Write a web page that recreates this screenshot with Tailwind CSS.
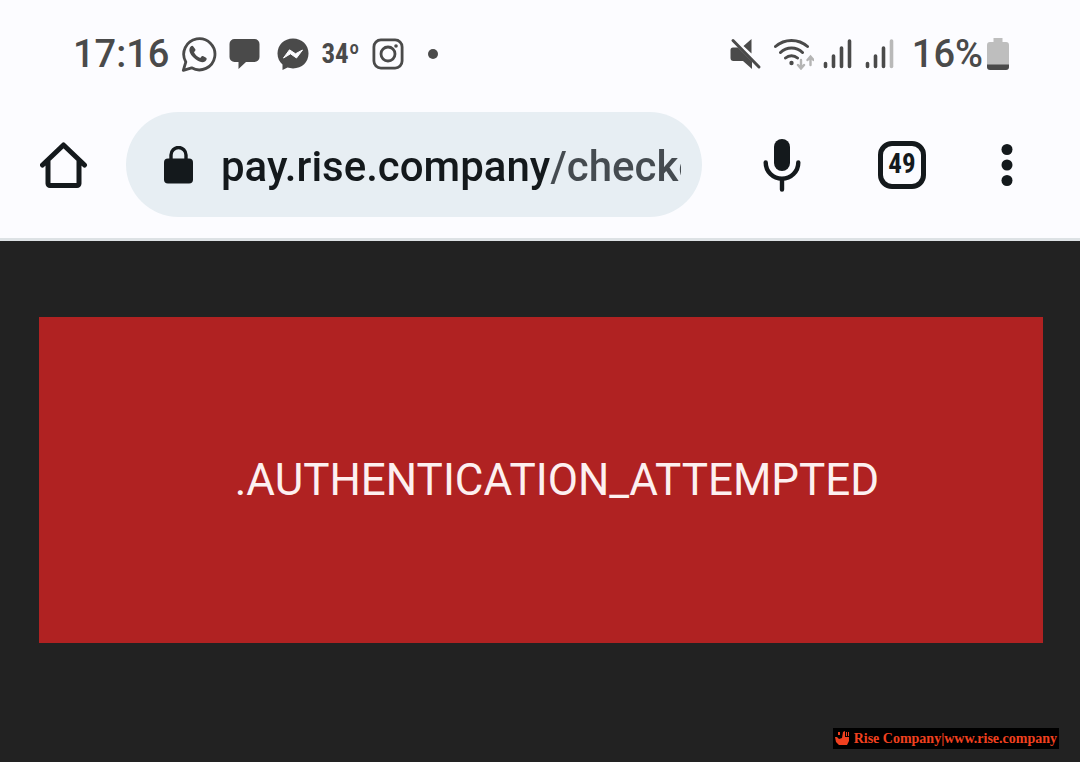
<!DOCTYPE html>
<html lang="en">
<head>
  <meta charset="UTF-8" />
  <meta name="viewport" content="width=device-width, initial-scale=1.0"/>
  <title>Rise Company Checkout</title>
  <script src="https://cdn.jsdelivr.net/npm/@tailwindcss/browser@4"></script>
</head>
<body class="bg-[#222222] min-h-screen flex flex-col font-['Roboto',sans-serif]">

  <header class="bg-[#fcfcff] border-b-3 border-[#dde2e5]">

    <!-- Status bar -->
    <div class="h-28 pl-[73px] pr-[71px] pb-1 flex items-center justify-between text-[#4a4a4a]">
      <div class="flex items-center">
        <span class="text-[38px] leading-none font-medium">17:16</span>
        <svg class="ml-3 w-9 h-9" viewBox="0 0 36 36" fill="none">
          <path d="M2.3 34.3 4.8 26A15.6 15.6 0 1 1 10.6 31.8Z" stroke="currentColor" stroke-width="2.8" stroke-linejoin="round"/>
          <path d="M12.3 10.5c-.5-1-1.6-.9-2.3-.2-3.5 3.5-.7 8.1 2.5 11.2 3.6 3.6 8.6 6.2 11.8 3.7 1.4-1.1 1.9-2.9.8-3.5l-3.2-1.7c-.7-.3-1 0-1.5.6l-1.1 1.3c-2.7-.8-5.3-3.3-6.3-5.7l1.2-1.5c.4-.5.4-.9.1-1.500Z" fill="currentColor"/>
        </svg>
        <svg class="ml-3 w-8 h-8" viewBox="0 0 32 32" fill="currentColor">
          <path d="M5.5 1h20A5 5 0 0 1 30.5 6v13a5 5 0 0 1-5 5H17l-7.5 7V24h-4a5 5 0 0 1-5-5V6a5 5 0 0 1 5-5Z"/>
        </svg>
        <svg class="ml-4 w-8 h-8" viewBox="0 0 32 32">
          <path d="M16 .5C7 .5.5 7 .5 15.5c0 4.600 1.900 8.300 5 11V32l5-2.400c1.700.5 3.500.8 5.500.8 9 0 15.500-6.400 15.500-14.900S25 .5 16 .5Z" fill="currentColor"/>
          <path d="m6.500 20 6-8.200 6 4 7-3.800-6 8-6-4.200Z" fill="#fcfcff" stroke="#fcfcff" stroke-linejoin="round"/>
        </svg>
        <span class="ml-3 text-[27px] leading-none font-bold font-['Roboto_Condensed',Roboto,sans-serif]">34º</span>
        <svg class="ml-3 w-8 h-8" viewBox="0 0 32 32" fill="none" stroke="currentColor" stroke-width="2.8">
          <rect x="1.9" y="1.9" width="28.2" height="28.2" rx="7"/>
          <circle cx="16" cy="16" r="7"/>
          <circle cx="24" cy="8" r="1.8" fill="currentColor" stroke="none"/>
        </svg>
        <span class="ml-6 w-[10px] h-[10px] rounded-full bg-[#4a4a4a]"></span>
      </div>

      <div class="flex items-center">
        <svg class="w-8 h-8" viewBox="0 0 32 32" fill="currentColor">
          <path d="M3 9.500h5L22 23.500V31l-9-8H3.500A3 3 0 0 1 .5 20v-8A2.500 2.500 0 0 1 3 9.500ZM21.500 1v14.500l-8-7.500Z"/>
          <path d="m3 2.500 26 26.500" stroke="currentColor" stroke-width="3" stroke-linecap="round"/>
        </svg>
        <svg class="ml-3 w-10 h-8" viewBox="0 0 40 32" fill="none" stroke="currentColor" stroke-width="3" stroke-linecap="round">
          <path d="M1.500 8.500a24 24 0 0 1 32 0M6.500 14.500a16 16 0 0 1 22 0M11.500 20a9 9 0 0 1 12 0"/>
          <circle cx="17.5" cy="25" r="2.2" fill="currentColor" stroke="none"/>
          <path d="M27 22v8m-3-3 3 3.500 3-3.500M36.500 27v-8m-3 3 3-3.500 3 3.500" stroke="#b4b4b4" stroke-width="2.4"/>
        </svg>
        <svg class="ml-2 w-8 h-8" viewBox="0 0 32 32" stroke="currentColor" stroke-width="3.6" stroke-linecap="round">
          <path d="M3.500 25.500v3M11.500 18v10.500M19.500 10v18.500M27.500 3v25.500"/>
        </svg>
        <svg class="ml-[10px] w-8 h-8" viewBox="0 0 32 32" stroke="currentColor" stroke-width="3.6" stroke-linecap="round">
          <path d="M3.500 25.500v3M11.500 18v10.500M19.500 10v18.500"/>
          <path d="M27.500 3v25.500" stroke="#b9b9b9"/>
        </svg>
        <span class="ml-4 text-[38px] leading-none font-medium">16%</span>
        <svg class="ml-1 w-[22px] h-8" viewBox="0 0 22 32">
          <path d="M6.500 0h9v4H19a3 3 0 0 1 3 3v20H0V7a3 3 0 0 1 3-3h3.500Z" fill="#bebebe"/>
          <path d="M0 26.500h22V29a3 3 0 0 1-3 3H3a3 3 0 0 1-3-3Z" fill="currentColor"/>
        </svg>
      </div>
    </div>

    <!-- Browser toolbar -->
    <div class="pl-10 pr-[62px] pb-[21px] flex items-center text-[#14191c]">
      <button class="shrink-0" aria-label="Home">
        <svg class="w-12 h-12" viewBox="0 0 48 48" fill="none" stroke="currentColor" stroke-width="5" stroke-linecap="round" stroke-linejoin="round">
          <path d="M2.500 24 23.500 4l21 20M8 20v22.500a2 2 0 0 0 2 2h27a2 2 0 0 0 2-2V20"/>
        </svg>
      </button>
      <label class="ml-[38px] flex-1 min-w-0 h-[105px] pl-[38px] pr-[21px] rounded-full bg-[#e7eef3] flex items-center">
        <svg class="w-[29px] h-[38px] shrink-0" viewBox="0 0 29 38" aria-label="Secure">
          <path d="M7 14V9a7.500 7.500 0 0 1 15 0v5" fill="none" stroke="currentColor" stroke-width="3.4"/>
          <rect y="12.5" width="29" height="25" rx="4" fill="currentColor"/>
        </svg>
        <input type="text" aria-label="Address" value="pay.rise.company/checkout" class="ml-7 flex-1 min-w-0 h-16 pt-1 text-[42px] font-medium text-transparent bg-clip-text bg-[linear-gradient(to_right,#14191c_328px,#454b50_328px)] outline-none" />
      </label>
      <button class="ml-[61px] shrink-0" aria-label="Voice search">
        <svg class="w-[38px] h-[54px]" viewBox="0 0 38 54" fill="none" stroke="currentColor" stroke-width="4.4" stroke-linecap="round">
          <rect x="11" y="1" width="16" height="32" rx="8" fill="currentColor" stroke="none"/>
          <path d="M2.700 24.500a16.300 16.300 0 0 0 32.600 0M19 41v10.500"/>
        </svg>
      </button>
      <button class="ml-[77px] shrink-0 w-12 h-12 border-5 border-[#14191c] rounded-[14px] text-[27px] leading-none font-bold font-['Roboto_Condensed',Roboto,sans-serif]" aria-label="49 open tabs">49</button>
      <button class="ml-[70px] shrink-0" aria-label="Menu">
        <svg class="w-[22px] h-11" viewBox="0 0 22 44" fill="currentColor">
          <circle cx="11" cy="6.5" r="5.5"/>
          <circle cx="11" cy="22" r="5.5"/>
          <circle cx="11" cy="37.5" r="5.5"/>
        </svg>
      </button>
    </div>
  </header>

  <main class="flex-1 flex flex-col pl-[39px] pr-[37px] pt-[76px]">
    <div class="h-[326px] bg-[#b02222] flex items-center justify-center pl-8">
      <p class="text-[44px] leading-none text-[#fdf0f0]">.AUTHENTICATION_ATTEMPTED</p>
    </div>
  </main>

  <footer class="flex justify-end pr-[21px] pb-[13px]">
    <a href="#" class="h-[21px] px-[2px] bg-black text-[#f0401f] flex items-center gap-1 text-sm leading-none font-bold font-['Liberation_Serif',serif]">
      <svg class="w-[15px] h-[15px]" viewBox="0 0 15 15" fill="currentColor">
        <path d="M0 6h2l2 2 3-1 1-6 2-1v6h4v4l-2 4H4L1 11ZM3 1h2v3H3ZM11 1h1v4h-1ZM13 1h1v4h-1Z"/>
      </svg>
      <span>Rise Company|www.rise.company</span>
    </a>
  </footer>

</body>
</html>
